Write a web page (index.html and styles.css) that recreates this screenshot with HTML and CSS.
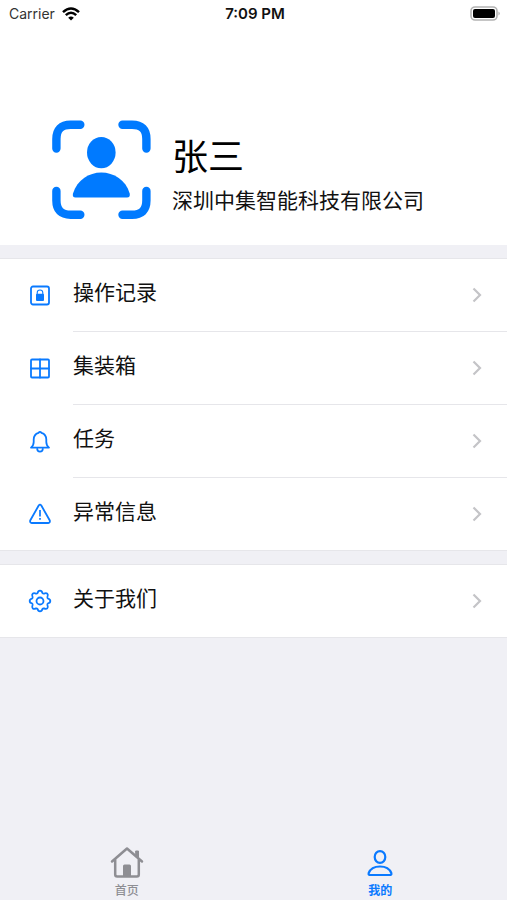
FILE: index.html
```html
<!DOCTYPE html>
<html lang="zh-CN">
<head>
<meta charset="utf-8">
<meta name="viewport" content="width=device-width, initial-scale=1">
<title>我的</title>
<link rel="stylesheet" href="styles.css">
</head>
<body>
<div class="screen">
  <header class="profile">
    <div class="status">
      <div class="carrier">
        <span>Carrier</span>
        <svg width="18" height="14" viewBox="0 0 18 14" fill="none" stroke="#000" stroke-width="2.5"><path d="M1 5.2Q9-2.2 17 5.2"/><path d="M3.8 8.2Q9 3.4 14.2 8.2"/><path d="M9 13.5 6.2 10.7Q9 8.4 11.8 10.7Z" fill="#000" stroke="none"/></svg>
      </div>
      <span class="time">7:09 PM</span>
      <svg class="battery" width="31" height="15" viewBox="0 0 31 15"><rect x="1" y="1" width="26" height="13" rx="4" fill="#fff" stroke="#b3b3b3" stroke-width="1.6"/><rect x="3" y="3" width="22" height="9" rx="2" fill="#000"/><path d="M28.5 5.5Q31 7.5 28.5 9.5Z" fill="#aaa"/></svg>
    </div>
    <div class="person">
      <svg width="100" height="100" viewBox="0 0 100 100" fill="#007aff"><g fill="none" stroke="#007aff" stroke-width="8.4" stroke-linecap="round"><path d="M4.4 28.5V19Q4.4 4.8 18.6 4.8H28.3"/><path d="M70.5 4.8H80Q94.4 4.8 94.4 19V28.5"/><path d="M94.4 71V80.5Q94.4 94.7 80 94.7H70.5"/><path d="M28.3 94.7H18.6Q4.4 94.7 4.4 80.5V71"/></g><ellipse cx="49.3" cy="32.6" rx="14.3" ry="15.6"/><path d="M23.5 77.5Q20 77.5 21 73.5C25 60 37 52.5 49.3 52.5S74 60 77.7 73.5Q78.5 77.5 75 77.5Z"/></svg>
      <div class="identity">
        <h1>张三</h1>
        <p>深圳中集智能科技有限公司</p>
      </div>
    </div>
  </header>

  <main class="groups">
    <nav class="group" aria-label="记录">
      <a class="row" href="#records">
        <svg class="icon" viewBox="0 0 24 24"><rect x="3" y="2.5" width="18" height="18" rx="2"/><path d="M9.2 11V8.8a2.8 2.8 0 0 1 5.6 0V11" stroke-width="1.1"/><rect x="8" y="9.8" width="8" height="7.2" rx="1" fill="#0a7aff" stroke="none"/></svg>
        <span class="cell"><span class="label">操作记录</span><svg class="chevron" viewBox="0 0 10 16"><path d="M1.5 1.5 8 8 1.5 14.5"/></svg></span>
      </a>
      <a class="row" href="#containers">
        <svg class="icon" viewBox="0 0 24 24"><rect x="3" y="2.5" width="18" height="18" rx="1"/><path d="M12 2.5V20.5M3 11.500H21"/></svg>
        <span class="cell"><span class="label">集装箱</span><svg class="chevron" viewBox="0 0 10 16"><path d="M1.5 1.5 8 8 1.5 14.5"/></svg></span>
      </a>
      <a class="row" href="#tasks">
        <svg class="icon" viewBox="0 0 24 24"><path d="M3 17.6H21Q18.3 15.5 18.3 12V9.500C18.3 6 16 3.600 13.500 2.800Q12 1 10.500 2.800C8 3.600 5.700 6 5.700 9.500V12Q5.700 15.500 3 17.600Z"/><path d="M9.200 18.800a2.800 2.800 0 0 0 5.600 0"/></svg>
        <span class="cell"><span class="label">任务</span><svg class="chevron" viewBox="0 0 10 16"><path d="M1.5 1.5 8 8 1.5 14.5"/></svg></span>
      </a>
      <a class="row" href="#alerts">
        <svg class="icon" viewBox="0 0 24 24"><path d="M10.7 3.500Q12 1.800 13.300 3.500L21.800 18.500Q22.300 20.700 20.200 21H3.800Q1.700 20.700 2.200 18.500Z"/><path d="M12 8V14.500M12 16V17.800" stroke-width="1.700" stroke-linecap="butt"/></svg>
        <span class="cell"><span class="label">异常信息</span><svg class="chevron" viewBox="0 0 10 16"><path d="M1.5 1.5 8 8 1.5 14.5"/></svg></span>
      </a>
    </nav>
    <nav class="group" aria-label="关于">
      <a class="row" href="#about">
        <svg class="icon" viewBox="0 0 24 24"><path transform="translate(12 12)" d="M-2.4-8Q-1.900-10.300 0-10.300T2.400-8Q3-7.200 4-7.400 6.200-8.400 7.280-7.280T7.400-4Q7.200-3 8-2.400 10.300-1.900 10.300 0T8 2.400Q7.200 3 7.400 4 8.400 6.200 7.280 7.280T4 7.400Q3 7.200 2.400 8 1.900 10.300 0 10.300T-2.400 8Q-3 7.200-4 7.400-6.200 8.400-7.280 7.280T-7.400 4Q-7.200 3-8 2.400-10.300 1.900-10.300 0T-8-2.400Q-7.200-3-7.400-4-8.400-6.200-7.280-7.280T-4-7.400Q-3-7.200-2.400-8Z"/><circle cx="12" cy="12" r="3.5"/></svg>
        <span class="cell"><span class="label">关于我们</span><svg class="chevron" viewBox="0 0 10 16"><path d="M1.5 1.5 8 8 1.5 14.5"/></svg></span>
      </a>
    </nav>
  </main>

  <nav class="tabs" aria-label="标签栏">
    <a class="tab" href="#home">
      <svg width="34" height="34" viewBox="0 0 34 34" fill="none" stroke="#8e8e93" stroke-width="2.5" stroke-linecap="round" stroke-linejoin="round"><path d="M2 15.5 17 2.5 32 15.5"/><path d="M5.2 14V28.5Q5.2 30.5 7.2 30.5H26.8Q28.8 30.5 28.8 28.5V14"/><path d="M26 5H28.5V12L26 10Z" fill="#8e8e93" stroke-width="1"/><path d="M13 30V20Q13 18.5 14.5 18.5H19.5Q21 18.5 21 20V30Z" fill="#8e8e93" stroke="none"/></svg>
      <span>首页</span>
    </a>
    <a class="tab active" href="#me" aria-current="page">
      <svg width="34" height="34" viewBox="0 0 34 34" fill="none" stroke="#0a7aff" stroke-width="2.2" stroke-linejoin="round"><ellipse cx="17" cy="11" rx="5.3" ry="5.9"/><path d="M7.500 29Q5 29 5.700 27C7.500 22.500 12 20.500 17 20.500S26.500 22.500 28.300 27Q29 29 26.500 29Z"/></svg>
      <span>我的</span>
    </a>
  </nav>
</div>
</body>
</html>
```
FILE: styles.css
```css
* {
  box-sizing: border-box;
}

body {
  margin: 0;
  background: #f0f0f5;
  color: #111;
  font-family: "Noto Sans CJK SC", sans-serif;
}

a {
  color: inherit;
  text-decoration: none;
}

svg {
  display: block;
  flex: none;
}

.screen {
  display: flex;
  flex-direction: column;
  min-height: 100vh;
}

.profile {
  background: #fff;
  padding-bottom: 25px;
}

.status {
  display: grid;
  grid-template-columns: 1fr auto 1fr;
  align-items: center;
  height: 27px;
  padding: 0 6px 0 9px;
  font-family: Inter, sans-serif;
  font-size: 14px;
  line-height: 20px;
}

.carrier {
  display: flex;
  align-items: center;
  gap: 7px;
  color: #333;
}

.time {
  font-size: 15px;
  font-weight: 600;
}

.battery {
  justify-self: end;
}

.person {
  display: flex;
  align-items: center;
  gap: 20px;
  margin-top: 93px;
  padding: 0 52px;
}

.identity {
  padding-top: 6px;
}

h1,
p {
  margin: 0;
  font-weight: 400;
  white-space: nowrap;
}

h1 {
  color: #000;
  font-size: 36px;
  line-height: 52px;
}

p {
  font-size: 21px;
  line-height: 38px;
}

.groups {
  display: grid;
  gap: 13px;
  padding-top: 13px;
}

.group {
  background: #fff;
  border-top: 1px solid #e6e6ea;
  border-bottom: 1px solid #e6e6ea;
}

.row {
  display: flex;
  align-items: center;
  padding-left: 28px;
}

.icon {
  width: 24px;
  height: 24px;
  fill: none;
  stroke: #0a7aff;
  stroke-width: 1.8px;
  stroke-linecap: round;
  stroke-linejoin: round;
}

.cell {
  display: flex;
  flex: 1;
  align-items: center;
  justify-content: space-between;
  height: 73px;
  margin-left: 21px;
  padding-right: 25px;
  border-bottom: 1px solid #e6e6ea;
}

.row:last-child .cell {
  height: 72px;
  border-bottom: 0;
}

.label {
  padding-bottom: 8px;
  font-size: 21px;
  line-height: 30px;
}

.chevron {
  width: 10px;
  height: 16px;
  fill: none;
  stroke: #c4c4c7;
  stroke-width: 2.2px;
}

.tabs {
  display: flex;
  margin-top: auto;
}

.tab {
  display: flex;
  flex: 1;
  flex-direction: column;
  align-items: center;
  color: #8e8e93;
  font-size: 12px;
  font-weight: 500;
  line-height: 20px;
}

.active {
  color: #0a7aff;
  font-weight: 700;
}
```
